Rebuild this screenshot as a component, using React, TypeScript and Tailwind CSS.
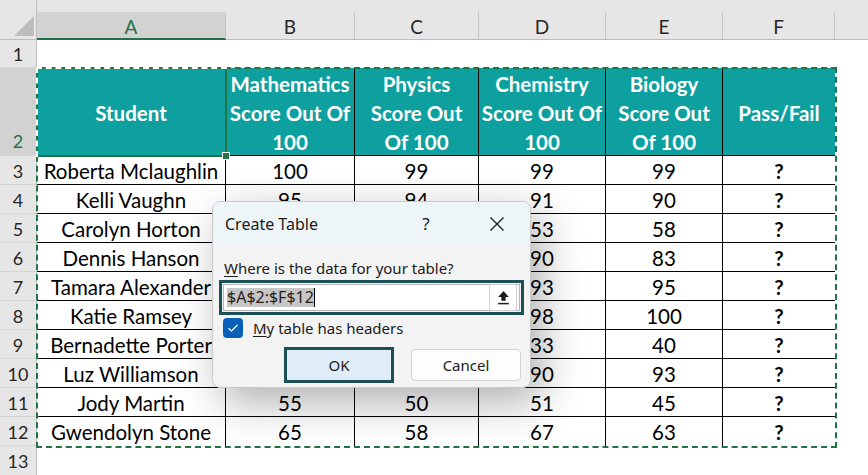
import React from 'react';

const colLetters = ['A', 'B', 'C', 'D', 'E', 'F', ''];

const headers: React.ReactNode[] = [
  'Student',
  <>Mathematics<br />Score Out Of<br />100</>,
  <>Physics<br />Score Out<br />Of 100</>,
  <>Chemistry<br />Score Out Of<br />100</>,
  <>Biology<br />Score Out<br />Of 100</>,
  'Pass/Fail',
];

const students = [
  ['Roberta Mclaughlin', '100', '99', '99', '99'],
  ['Kelli Vaughn', '95', '94', '91', '90'],
  ['Carolyn Horton', '60', '55', '53', '58'],
  ['Dennis Hanson', '88', '85', '90', '83'],
  ['Tamara Alexander', '92', '96', '93', '95'],
  ['Katie Ramsey', '97', '99', '98', '100'],
  ['Bernadette Porter', '38', '35', '33', '40'],
  ['Luz Williamson', '91', '89', '90', '93'],
  ['Jody Martin', '55', '50', '51', '45'],
  ['Gwendolyn Stone', '65', '58', '67', '63'],
];

function RowHead({ n, active }: { n: number; active?: boolean }) {
  return (
    <div
      className={`border-r border-b border-r-[#bdbdbd] border-b-[#d4d4d4] flex justify-center text-[18px] ${
        active ? 'bg-[#d2d2d2] text-[#217346] items-end' : 'bg-[#e6e6e6] text-[#262626] items-center pt-[2px]'
      }`}
    >
      {n}
    </div>
  );
}

export default function App() {
  return (
    <div className="relative w-[868px] h-[475px] overflow-hidden bg-white font-['Lato',sans-serif] text-black grid grid-cols-[37px_189px_129px_124px_127px_117px_112px_1fr] grid-rows-[40px_28px_88px_repeat(10,29px)_1fr]">
      {/* column headers */}
      <div className="bg-[#e6e6e6] border-b border-[#bdbdbd] border-r border-r-[#bdbdbd] relative">
        <svg className="absolute left-0 top-0" width="37" height="40" viewBox="0 0 37 40">
          <polygon points="34,16 34,36 14,36" fill="#bdbdbd" />
        </svg>
      </div>
      {colLetters.map((c, i) => (
        <div key={i} className="bg-[#e6e6e6] pt-3 flex border-b border-[#bdbdbd]">
          <div
            className={`flex-1 flex items-center justify-center pt-[4px] text-[19px] ${
              i === 6 ? '' : 'border-r border-[#c4c4c4]'
            } ${i === 0 ? 'bg-[#d2d2d2] text-[#217346] border-b-2 border-b-[#217346] -mb-px' : 'text-[#262626]'}`}
          >
            {c}
          </div>
        </div>
      ))}

      {/* row 1 */}
      <RowHead n={1} />
      <div className="col-span-7" />

      {/* row 2: table header */}
      <RowHead n={2} active />
      {headers.map((h, i) => (
        <div
          key={i}
          className={`bg-[#0e9f9f] text-white font-bold text-[20.5px] leading-[29px] text-center flex items-center justify-center pt-[3px] border-b border-black ${
            i < 5 ? 'border-r' : ''
          }`}
        >
          <span>{h}</span>
        </div>
      ))}
      <div />

      {/* data rows */}
      {students.map((s, r) => (
        <React.Fragment key={r}>
          <RowHead n={r + 3} />
          {[...s, '?'].map((v, i) => (
            <div
              key={i}
              className={`flex items-center justify-center pt-[2px] text-[20.5px] border-black ${i < 5 ? 'border-r' : ''} ${
                r < 9 ? 'border-b' : ''
              } ${i === 5 ? 'font-bold' : ''}`}
            >
              {v}
            </div>
          ))}
          <div />
        </React.Fragment>
      ))}

      {/* row 13 */}
      <RowHead n={13} />
      <div className="col-span-7" />

      {/* selection marquee */}
      <div className="absolute left-[36px] top-[67px] w-[801px] h-[381px] border-2 border-dashed border-[#217346] pointer-events-none" />
      {/* active cell A2 */}
      <div className="absolute left-[36px] top-[67px] w-[191px] h-[90px] border-2 border-[#217346]" />
      <div className="absolute left-[36px] top-[67px] w-[191px] h-[90px] border-t-2 border-l-2 border-dashed border-white" />
      <div className="absolute left-[222px] top-[152px] w-[8px] h-[8px] bg-[#217346] border border-white" />

      {/* Create Table dialog */}
      <div className="absolute left-[212px] top-[201px] w-[319px] h-[187px] rounded-[8px] border border-[#c9c9c9] bg-[#f3f3f3] overflow-hidden shadow-[10px_14px_44px_rgba(0,0,0,0.32)] font-['Noto_Sans',sans-serif] text-[#1b1b1b]">
        <div className="h-[44px] bg-[#eef5f7] flex items-center pl-[12px] pr-[10px] text-[16px]">
          <span>Create Table</span>
          <span className="flex-1" />
          <span className="w-[40px] text-center text-[17px]">?</span>
          <span className="w-[28px]" />
          <span className="w-[46px] flex justify-center">
            <svg width="16" height="16" viewBox="0 0 16 16" fill="none" stroke="#1b1b1b" strokeWidth="1.3">
              <path d="M1.5 1.5 L14.5 14.5 M14.5 1.5 L1.5 14.5" />
            </svg>
          </span>
        </div>
        <div className="px-[6px] pt-[12px]">
          <div className="pl-[5px] text-[15px] leading-[20px]">
            <span className="underline underline-offset-2">W</span>here is the data for your table?
          </div>
          <div className="mt-[2px] h-[35px] border-[3px] border-[#1d4f57] p-px">
            <div className="h-full bg-white border border-[#b5b5b5] flex items-center pl-[3px] pr-[2px]">
              <span className="bg-[#c6c6c6] text-[16px] leading-[19px] text-[#2a1a1a]">$A$2:$F$12</span>
              <span className="w-px h-[19px] bg-black" />
              <span className="flex-1" />
              <span className="w-[28px] h-[27px] bg-white border border-[#cfcfcf] rounded-[3px] flex items-center justify-center">
                <svg width="13" height="15" viewBox="0 0 12 14">
                  <path d="M6 1 L11 6.5 L8 6.5 L8 10 L4 10 L4 6.5 L1 6.5 Z" fill="#1b1b1b" />
                  <rect x="1" y="12" width="10" height="1.4" fill="#1b1b1b" />
                </svg>
              </span>
            </div>
          </div>
          <div className="mt-[3px] flex items-center h-[20px] pl-[4px]">
            <span className="w-[20px] h-[20px] rounded-[4px] bg-[#0a5fb8] flex items-center justify-center">
              <svg width="12" height="10" viewBox="0 0 12 10" fill="none" stroke="white" strokeWidth="1.2">
                <path d="M1.5 5.2 L4.5 8 L10.5 2" />
              </svg>
            </span>
            <span className="ml-[10px] text-[15px]">
              <span className="underline underline-offset-2">M</span>y table has headers
            </span>
          </div>
          <div className="mt-[9px] flex">
            <div className="ml-[65px] w-[110px] h-[36px] border-[3px] border-[#1d4f57] bg-[#e0ecf8] flex items-center justify-center text-[15px]">
              OK
            </div>
            <div className="ml-[17px] mt-[2px] w-[110px] h-[32px] rounded-[4px] border border-[#d3d3d3] bg-[#fdfdfd] flex items-center justify-center text-[15px]">
              Cancel
            </div>
          </div>
        </div>
      </div>
    </div>
  );
}
